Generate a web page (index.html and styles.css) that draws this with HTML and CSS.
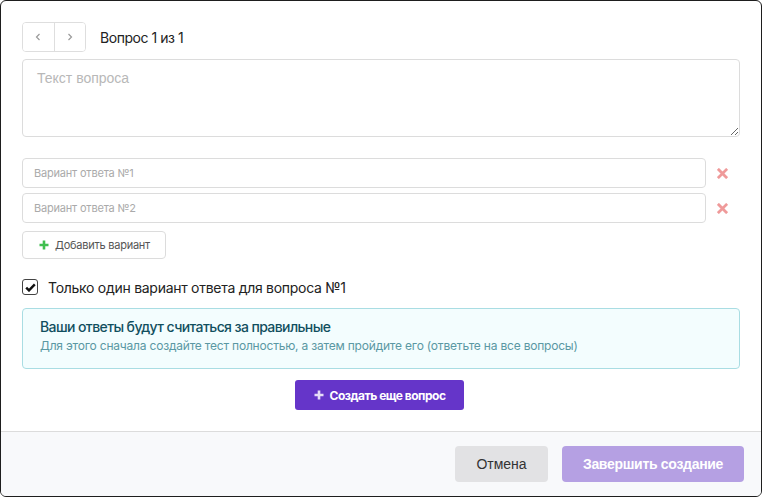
FILE: index.html
```html
<!DOCTYPE html>
<html lang="ru">
<head>
<meta charset="utf-8">
<title>Вопрос</title>
<link rel="stylesheet" href="styles.css">
</head>
<body>
<div class="modal">
  <div class="modal-body">
    <div class="nav-row">
      <div class="nav-group">
        <button class="nav-btn" type="button" aria-label="Назад">
          <svg width="6" height="8" viewBox="0 0 6 8"><path d="M4.5 1 L1.5 4 L4.5 7" fill="none" stroke="#9a9a9a" stroke-width="1.2"/></svg>
        </button>
        <button class="nav-btn" type="button" aria-label="Вперёд">
          <svg width="6" height="8" viewBox="0 0 6 8"><path d="M1.5 1 L4.5 4 L1.5 7" fill="none" stroke="#9a9a9a" stroke-width="1.2"/></svg>
        </button>
      </div>
      <span class="nav-title">Вопрос 1 из 1</span>
    </div>

    <textarea class="question" placeholder="Текст вопроса"></textarea>

    <div class="options">
      <div class="option-row">
        <input class="option-input" type="text" placeholder="Вариант ответа №1">
        <span class="remove">
          <svg width="11" height="11" viewBox="0 0 12 12"><path d="M2 2 L10 10 M10 2 L2 10" stroke="#ef9a9a" stroke-width="3" stroke-linecap="square"/></svg>
        </span>
      </div>
      <div class="option-row">
        <input class="option-input" type="text" placeholder="Вариант ответа №2">
        <span class="remove">
          <svg width="11" height="11" viewBox="0 0 12 12"><path d="M2 2 L10 10 M10 2 L2 10" stroke="#ef9a9a" stroke-width="3" stroke-linecap="square"/></svg>
        </span>
      </div>
    </div>

    <button class="add-btn" type="button">
      <svg width="10" height="10" viewBox="0 0 10 10"><path d="M5 0.5 V9.5 M0.5 5 H9.5" stroke="#3fbf4f" stroke-width="2.6"/></svg>
      <span>Добавить вариант</span>
    </button>

    <label class="check-row">
      <span class="checkbox">
        <svg width="11" height="9" viewBox="0 0 11 9"><path d="M1.2 4.6 L4 7.4 L9.8 1.4" fill="none" stroke="#111" stroke-width="2.4"/></svg>
      </span>
      <span class="check-label">Только один вариант ответа для вопроса №1</span>
    </label>

    <div class="alert">
      <div class="alert-title">Ваши ответы будут считаться за правильные</div>
      <div class="alert-text">Для этого сначала создайте тест полностью, а затем пройдите его (ответьте на все вопросы)</div>
    </div>

    <div class="create-wrap">
      <button class="create-btn" type="button">
        <svg width="10" height="10" viewBox="0 0 10 10"><path d="M5 0.5 V9.5 M0.5 5 H9.5" stroke="#e6dcf7" stroke-width="2.6"/></svg>
        <span>Создать еще вопрос</span>
      </button>
    </div>
  </div>

  <div class="modal-footer">
    <button class="btn-cancel" type="button">Отмена</button>
    <button class="btn-finish" type="button">Завершить создание</button>
  </div>
</div>
</body>
</html>
```

FILE: styles.css
```css
* { box-sizing: border-box; }

html, body {
  margin: 0;
  padding: 0;
  background: #ffffff;
}

body {
  font-family: Inter, "Noto Sans", sans-serif;
  color: #222;
}

.modal {
  width: 762px;
  height: 497px;
  border: 1px solid #1e1e1e;
  border-radius: 6px;
  overflow: hidden;
  display: flex;
  flex-direction: column;
  background: #fff;
}

.modal-body {
  flex: 1;
  padding: 21px 21px 0 21px;
  display: flex;
  flex-direction: column;
}

.nav-row {
  display: flex;
  align-items: center;
  height: 30px;
  gap: 14px;
}

.nav-group {
  display: flex;
  border: 1px solid #dedede;
  border-radius: 4px;
  height: 30px;
  width: 64px;
  overflow: hidden;
}

.nav-btn {
  flex: 1;
  border: none;
  background: #fff;
  padding: 0;
  display: flex;
  align-items: center;
  justify-content: center;
}

.nav-btn + .nav-btn {
  border-left: 1px solid #dedede;
}

.nav-title {
  font-size: 14px;
  letter-spacing: -0.45px;
  color: #222;
}

.question {
  margin-top: 7px;
  height: 78px;
  width: 100%;
  border: 1px solid #dcdcdc;
  border-radius: 4px;
  padding: 10px 14px;
  font-family: "Liberation Sans", Arial, sans-serif;
  font-size: 14px;
  resize: vertical;
  outline: none;
}

.question::placeholder {
  color: #b8b8b8;
}

.options {
  margin-top: 21px;
  display: flex;
  flex-direction: column;
  gap: 5px;
}

.option-row {
  display: flex;
  align-items: center;
}

.option-input {
  flex: 1;
  height: 30px;
  border: 1px solid #dcdcdc;
  border-radius: 4px;
  padding: 0 11px;
  font-family: Inter, sans-serif;
  font-size: 11px;
  letter-spacing: -0.2px;
  outline: none;
}

.option-input::placeholder {
  color: #aaa;
}

.remove {
  width: 34px;
  display: flex;
  justify-content: center;
  padding-right: 2px;
}

.add-btn {
  margin-top: 8px;
  align-self: flex-start;
  height: 28px;
  width: 144px;
  border: 1px solid #dcdcdc;
  border-radius: 4px;
  background: #fff;
  display: flex;
  align-items: center;
  gap: 6px;
  padding: 0 0 0 16px;
  font-family: Inter, sans-serif;
  font-size: 11px;
  letter-spacing: -0.25px;
  color: #555;
}

.check-row {
  margin-top: 19px;
  display: flex;
  align-items: center;
  gap: 10px;
  height: 18px;
}

.checkbox {
  width: 16px;
  height: 16px;
  border: 1px solid #444;
  border-radius: 3px;
  display: flex;
  align-items: center;
  justify-content: center;
  background: #fff;
}

.check-label {
  font-size: 14px;
  letter-spacing: -0.28px;
  color: #222;
}

.alert {
  margin-top: 12px;
  height: 61px;
  border: 1px solid #a9dde3;
  border-radius: 4px;
  background: #f3fdfe;
  padding: 9px 17px;
}

.alert-title {
  font-size: 14px;
  font-weight: 500;
  letter-spacing: -0.6px;
  color: #114f5e;
  line-height: 18px;
}

.alert-text {
  margin-top: 2px;
  font-size: 12px;
  letter-spacing: -0.2px;
  color: #5a98a3;
  line-height: 16px;
}

.create-wrap {
  margin-top: 11px;
  display: flex;
  justify-content: center;
  padding-right: 3px;
}

.create-btn {
  height: 30px;
  width: 169px;
  border: none;
  border-radius: 3px;
  background: #6535c9;
  color: #fff;
  font-family: Inter, sans-serif;
  font-size: 12px;
  font-weight: 700;
  letter-spacing: -0.5px;
  display: flex;
  align-items: center;
  justify-content: center;
  gap: 6px;
  padding: 0;
}

.modal-footer {
  height: 65px;
  border-top: 1px solid #dcdcdc;
  background: #f8f9fb;
  display: flex;
  justify-content: flex-end;
  align-items: center;
  gap: 14px;
  padding-right: 17px;
}

.btn-cancel,
.btn-finish {
  height: 36px;
  border: none;
  border-radius: 4px;
  font-family: "Liberation Sans", Arial, sans-serif;
  font-size: 14px;
}

.btn-cancel {
  width: 93px;
  background: #e2e2e4;
  color: #333;
}

.btn-finish {
  width: 182px;
  background: #b5a0e3;
  color: #fff;
  font-weight: 700;
  letter-spacing: -0.3px;
}
```
